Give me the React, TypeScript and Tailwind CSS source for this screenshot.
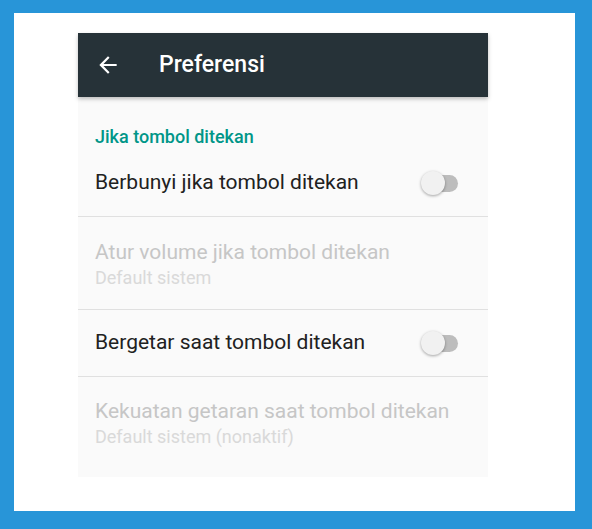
import React from "react";

const font = { fontFamily: "Roboto, 'Noto Sans', sans-serif" };

function Toggle() {
  return (
    <div className="relative w-[40px] h-[24px] mr-[3px]">
      <div className="absolute left-[4px] top-[4px] w-[33px] h-[17px] rounded-full bg-[#bdbdbd]" />
      <div className="absolute left-0 top-0 w-[24px] h-[24px] rounded-full bg-[#f1f1f1] shadow-[0_1px_3px_rgba(0,0,0,0.35)]" />
    </div>
  );
}

function SwitchRow({ title }: { title: string }) {
  return (
    <div className="h-[66px] flex items-center justify-between pl-[17px] pr-[24px]">
      <span className="text-[21px] text-[#212121]">{title}</span>
      <Toggle />
    </div>
  );
}

function DisabledRow({ title, sub, pt, pb }: { title: string; sub: string; pt: string; pb: string }) {
  return (
    <div className={`pl-[17px] ${pt} ${pb}`}>
      <div className="text-[21px] leading-[26px] text-[#c6c6c6]">{title}</div>
      <div className="text-[18px] leading-[26px] text-[#d9d9d9]">{sub}</div>
    </div>
  );
}

const Divider = () => <div className="h-px bg-[#e0e0e0]" />;

export default function App() {
  return (
    <div className="w-[592px] h-[529px] bg-[#2895d8] pt-[13px] pl-[14px]" style={font}>
      <div className="w-[561px] h-[498px] bg-white pt-[20px] pl-[64px]">
        <div className="w-[410px] bg-[#fafafa]">
          <div className="relative h-[64px] bg-[#263238] flex items-center shadow-[0_2px_4px_rgba(0,0,0,0.25)]">
            <svg width="26" height="26" viewBox="0 0 24 24" className="ml-[17px]" fill="white">
              <path d="M20 11H7.83l5.59-5.59L12 4l-8 8 8 8 1.41-1.41L7.83 13H20v-2z" />
            </svg>
            <span className="ml-[38px] text-[23px] font-medium text-white">Preferensi</span>
          </div>
          <div className="pt-[28px] pb-px pl-[17px]">
            <div className="text-[18px] leading-[24px] font-medium text-[#009688]">Jika tombol ditekan</div>
          </div>
          <SwitchRow title="Berbunyi jika tombol ditekan" />
          <Divider />
          <DisabledRow title="Atur volume jika tombol ditekan" sub="Default sistem" pt="pt-[22px]" pb="pb-[18px]" />
          <Divider />
          <SwitchRow title="Bergetar saat tombol ditekan" />
          <Divider />
          <DisabledRow title="Kekuatan getaran saat tombol ditekan" sub="Default sistem (nonaktif)" pt="pt-[21px]" pb="pb-[27px]" />
        </div>
      </div>
    </div>
  );
}
